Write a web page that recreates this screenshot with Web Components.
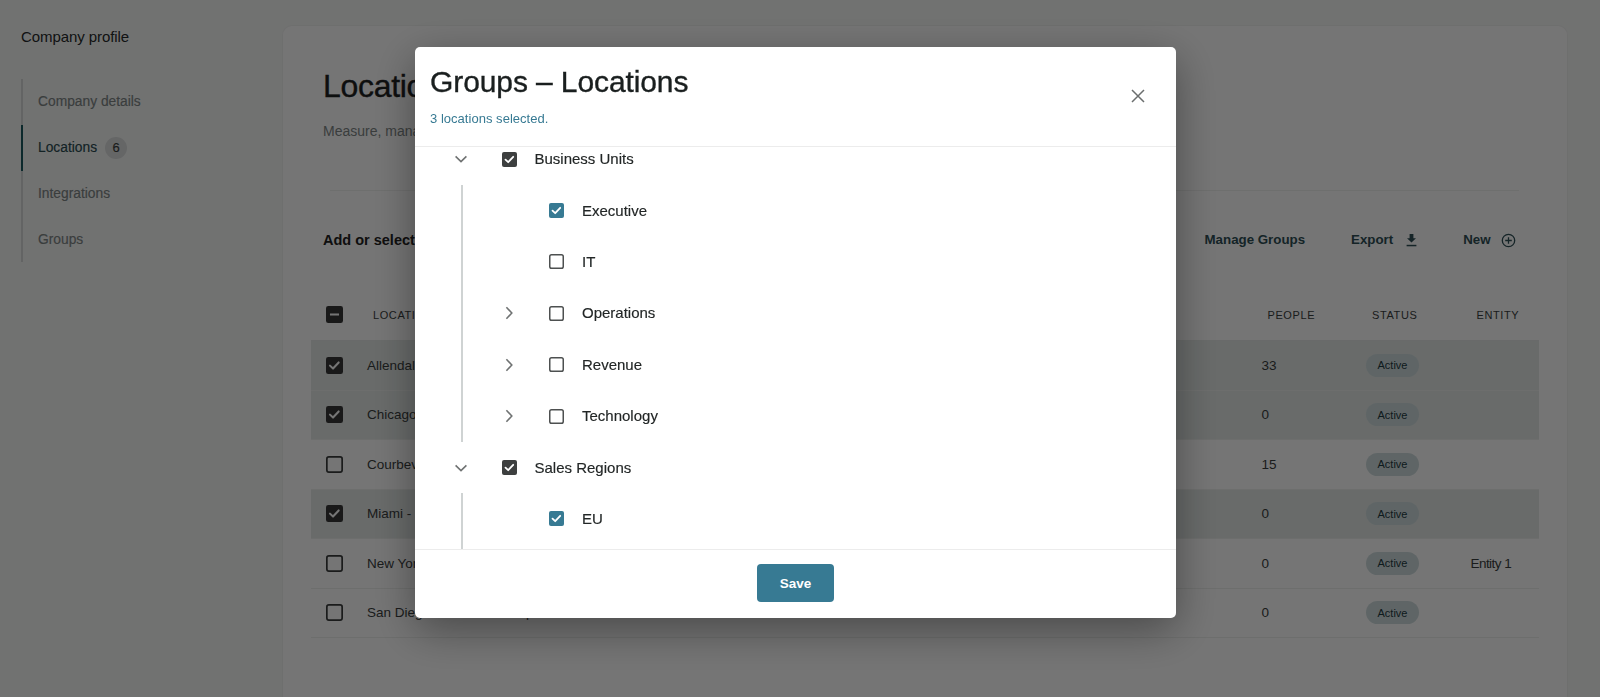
<!DOCTYPE html>
<html lang="en"><head><meta charset="utf-8"><title>Locations</title>
<style>
html,body{margin:0;height:100%;overflow:hidden}
body{background:#f7f8f7;font-family:"Liberation Sans",Arial,sans-serif;color:#2a2e2e}
</style></head><body>
<app-shell>
  <side-nav title="Company profile" slot="side">
    <nav-item>Company details</nav-item>
    <nav-item active badge="6">Locations</nav-item>
    <nav-item>Integrations</nav-item>
    <nav-item>Groups</nav-item>
  </side-nav>
  <main-card>
    <page-head title="Locations" sub="Measure, manage and report across every location in your company."></page-head>
    <tool-bar label="Add or select locations"></tool-bar>
    <loc-table>
      <loc-row head name="LOCATION" people="PEOPLE" status="STATUS" entity="ENTITY"></loc-row>
      <loc-row sel name="Allendale - Headquarters" people="33" status="Active"></loc-row>
      <loc-row sel name="Chicago - Regional Office" people="0" status="Active"></loc-row>
      <loc-row name="Courbevoie - Paris Office" people="15" status="Active"></loc-row>
      <loc-row sel name="Miami - Florida Office" people="0" status="Active"></loc-row>
      <loc-row name="New York - Midtown Office" people="0" status="Active" entity="Entity 1"></loc-row>
      <loc-row name="San Diego - Sorrento Campus" people="0" status="Active"></loc-row>
    </loc-table>
  </main-card>
</app-shell>
<group-modal title="Groups – Locations" sub="3 locations selected.">
  <tree-row level="0" chev="down" check="dark">Business Units</tree-row>
  <tree-group>
    <tree-row level="1" check="teal">Executive</tree-row>
    <tree-row level="1" check="none">IT</tree-row>
    <tree-row level="1" chev="right" check="none">Operations</tree-row>
    <tree-row level="1" chev="right" check="none">Revenue</tree-row>
    <tree-row level="1" chev="right" check="none">Technology</tree-row>
  </tree-group>
  <tree-row level="0" chev="down" check="dark">Sales Regions</tree-row>
  <tree-group>
    <tree-row level="1" check="teal">EU</tree-row>
    <tree-row level="1" check="none">US</tree-row>
  </tree-group>
</group-modal>
<script>
const FONT='"Liberation Sans",Arial,sans-serif';
function def(name,html,setup){
  customElements.define(name,class extends HTMLElement{
    constructor(){super();this.attachShadow({mode:'open'});}
    connectedCallback(){
      const a=n=>this.getAttribute(n);
      this.shadowRoot.innerHTML=typeof html==='function'?html(a,this):html;
      if(setup)setup(this,a);
    }
  });
}
const checkPath='<path d="M3.5 7.6 6.2 10.2 11.2 4.8" fill="none" stroke="#fff" stroke-width="1.8" stroke-linecap="round" stroke-linejoin="round"/>';

def('app-shell',`<style>:host{display:flex;height:697px;box-sizing:border-box;align-items:stretch}
.s{flex:0 0 282px;box-sizing:border-box;padding:26px 0 0 21px}
.m{flex:0 0 1286px;padding-top:25px;box-sizing:border-box}</style>
<div class="s"><slot name="side"></slot></div><div class="m"><slot></slot></div>`);

def('side-nav',a=>`<style>:host{display:block}
h2{margin:0 0 31.4px;font:400 15px/22px ${FONT};color:#262a2a;letter-spacing:-.08px}
.rail{display:flex;flex-direction:column}</style>
<h2>${a('title')}</h2><div class="rail"><slot></slot></div>`);

def('nav-item',a=>`<style>:host{display:flex;align-items:center;gap:8px;height:45.75px;box-sizing:border-box;padding-left:15px;border-left:2px solid ${a('active')!==null?'#1b5a60':'#d8dada'};font:400 13.8px/20px ${FONT};-webkit-text-stroke:.15px currentColor;color:${a('active')!==null?'#2a4a50':'#7e8686'}}
.b{width:22px;height:22px;border-radius:50%;background:#dcdede;color:#3a3e3e;display:flex;align-items:center;justify-content:center;font-size:13px}</style>
<slot></slot>${a('badge')?`<span class="b">${a('badge')}</span>`:''}`);

def('main-card',`<style>:host{display:block;box-sizing:border-box;height:672px;background:#fff;border:1px solid #f0f1f0;border-bottom:0;border-radius:10px 10px 0 0;padding:0 28px 0 28px}</style><slot></slot>`);

def('page-head',a=>`<style>:host{display:block;padding:39px 0 0 12px}
h1{margin:0;font:400 32px/42px ${FONT};color:#1e2222;letter-spacing:-.3px;-webkit-text-stroke:.35px currentColor}
p{margin:14px 0 0;font:400 14px/20px ${FONT};color:#7e8686}
hr{border:0;border-top:1px solid #f0f1f0;margin:49px 20px 0 7px}</style>
<h1>${a('title')}</h1><p>${a('sub')}</p><hr>`);

def('tool-bar',a=>`<style>:host{display:flex;align-items:center;height:98px;box-sizing:border-box;padding:0 23.5px 0 12px;font:700 13.3px/20px ${FONT};color:#2f4f56}
.l{color:#222;font-size:14.5px;flex:1}
.i{display:flex;align-items:center}
svg{display:block}</style>
<span class="l">${a('label')}</span>
<span class="i" style="margin-right:46px">Manage Groups</span>
<span class="i" style="margin-right:46px">Export<svg style="margin-left:13px" width="11" height="13" viewBox="0 0 11 13"><path d="M3.6 0h3.8v4.2h2.6L5.5 8.6 1 4.2h2.6z" fill="#2f4f56"/><rect x="0.6" y="10.8" width="9.8" height="1.5" fill="#2f4f56"/></svg></span>
<span class="i">New<svg style="margin-left:10px" width="15" height="15" viewBox="0 0 15 15"><circle cx="7.5" cy="7.5" r="6.2" fill="none" stroke="#2f4f56" stroke-width="1.3"/><path d="M7.5 4.2v6.6M4.2 7.5h6.6" stroke="#2f4f56" stroke-width="1.3"/></svg></span>`);

def('loc-table',`<style>:host{display:flex;flex-direction:column;width:1228px}</style><slot></slot>`);

def('check-box',a=>{
  const k=a('kind');
  const col={dark:'#3d3f3f',teal:'#377a93',black:'#383838'}[k];
  const s=+(a('size')||15);
  return `<style>:host{display:block;width:${s}px;height:${s}px;flex:none}svg{display:block}</style>
  <svg width="${s}" height="${s}" viewBox="0 0 15 15">${
    k==='none'?`<rect x=".75" y=".75" width="13.5" height="13.5" rx="1.8" fill="none" stroke="${a('line')||'#4d5050'}" stroke-width="1.5"/>`:
    `<rect width="15" height="15" rx="2" fill="${col}"/>`+(a('mark')==='minus'?'<path d="M3.5 7.5h8" stroke="#fff" stroke-width="1.8"/>':checkPath)
  }</svg>`;
});

def('status-pill',`<style>:host{display:inline-flex;align-items:center;justify-content:center;width:53px;height:23px;border-radius:12px;background:#cfdddf;color:#1f3b42;font:400 11px/14px ${FONT}}</style><slot></slot>`);

def('loc-row',a=>{
  const head=a('head')!==null, sel=a('sel')!==null;
  const box=head?`<check-box size="17" kind="black" mark="minus"></check-box>`:
    `<check-box size="17" kind="${sel?'black':'none'}" line="#3a3c3c"></check-box>`;
  const st=head?a('status'):`<status-pill>${a('status')}</status-pill>`;
  return `<style>:host{display:grid;grid-template-columns:56px 894.5px 104.5px 104.5px 1fr;align-items:center;box-sizing:border-box;height:${head?'52px':'49.5px'};border-bottom:1px solid ${head?'#e4e8e6':'#eef0ee'};background:${sel?'#e4e9e7':'transparent'};font:400 13.5px/18px ${FONT};color:#3a3e3e}
  .c{padding-left:15px}
  .e{letter-spacing:-.55px}
  .n{padding-top:${head?0:1}px}
  ${head?`.t{padding-left:6px;font-size:11px;letter-spacing:.6px;color:#3a3e3e}.e{letter-spacing:.6px}`:''}</style>
  <div class="c">${box}</div>
  <div class="t n">${a('name')}</div><div class="t n">${a('people')||''}</div><div class="t">${st||''}</div><div class="t e n">${a('entity')||''}</div>`;
});

def('group-modal',a=>`<style>:host{position:fixed;inset:0;background:rgba(0,0,0,.54);display:block}
.box{position:absolute;left:415px;top:47px;width:761px;height:571px;background:#fff;border-radius:5px;box-shadow:0 12px 44px rgba(0,0,0,.38);display:flex;flex-direction:column;overflow:hidden}
header{flex:0 0 99.5px;box-sizing:border-box;padding:16px 15px 0;border-bottom:1px solid #ececec;position:relative}
h2{margin:0;font:400 30px/38px ${FONT};color:#1a1f1f;letter-spacing:-.1px;-webkit-text-stroke:.35px currentColor}
p{margin:9px 0 0;font:400 13px/18px ${FONT};color:#377a93;letter-spacing:.03px}
.x{position:absolute;left:716px;top:42px;display:block}
.body{flex:1;min-height:0;overflow:hidden}
.in{margin-top:-13px;padding-left:30px}
footer{flex:0 0 69px;box-sizing:border-box;border-top:1px solid #ececec;display:flex;justify-content:center;padding-top:14px}
button{width:77px;height:38px;border:0;border-radius:4px;background:#377a93;color:#fff;font:700 13.5px/18px ${FONT};padding:1px 0 0}</style>
<div class="box"><header><h2>${a('title')}</h2><p>${a('sub')}</p>
<svg class="x" width="14" height="14" viewBox="0 0 14 14"><path d="M1 1l12 12M13 1 1 13" stroke="#6b6e6e" stroke-width="1.5"/></svg></header>
<div class="body"><div class="in"><slot></slot></div></div>
<footer><button>Save</button></footer></div>`);

def('tree-group',`<style>:host{display:block;margin-left:15.5px;border-left:2px solid #cfd3d3;box-sizing:border-box;padding:0;}
::slotted(*){margin-left:-17.5px}</style><slot></slot>`);

def('tree-row',a=>{
  const lvl=+a('level'), ch=a('chev');
  const chev=ch==='down'?`<svg width="14" height="14" viewBox="0 0 14 14"><path d="M1.6 4.4 7 9.6l5.4-5.2" fill="none" stroke="#6f7272" stroke-width="1.6"/></svg>`:
    ch==='right'?`<svg width="14" height="14" viewBox="0 0 14 14"><path d="M4.4 1.2 9.8 7l-5.4 5.8" fill="none" stroke="#6f7272" stroke-width="1.6"/></svg>`:'';
  return `<style>:host{display:flex;align-items:center;height:51.4px;font:400 15px/20px ${FONT};color:#222626;-webkit-text-stroke:.15px currentColor}
  .ch{width:14px;height:14px;margin-left:${lvl?56.5:9}px;margin-right:33.5px;flex:none}
  svg{display:block}
  .lb{margin-left:18px}</style>
  <span class="ch">${chev}</span><check-box kind="${a('check')}"></check-box><span class="lb"><slot></slot></span>`;
});
</script>
</body></html>
